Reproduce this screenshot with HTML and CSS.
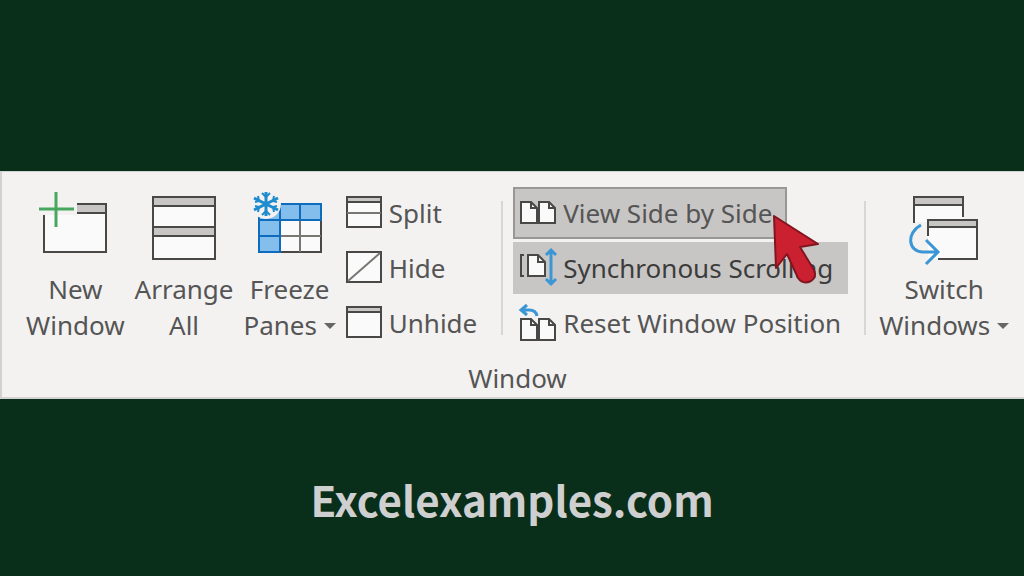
FILE: index.html
```
<!DOCTYPE html>
<html lang="en">
<head>
  <meta charset="utf-8">
  <title>View Side by Side</title>
  <link rel="stylesheet" href="styles.css">
</head>
<body>
  <section class="ribbon">
    <div class="tools">
      <button class="big">
        <svg class="big-icon" viewBox="0 0 72 74">
          <path class="paper" d="M5 24H38V13H67V61H5z"/>
          <path class="bar" d="M38 13H67V22H38z"/>
          <path class="line" d="M38 13H67V61H5V24M38 22H67"/>
          <path class="green" d="M17 1V36M0 18H35"/>
        </svg>
        <span>New<br>Window</span>
      </button>
      <button class="big">
        <svg class="big-icon" viewBox="0 0 72 74">
          <path class="paper" d="M5 6H67V68H5z"/>
          <path class="bar" d="M5 6H67V15H5zM5 36H67V45H5z"/>
          <path class="line" d="M5 6H67V68H5zM5 15H67M5 36H67M5 45H67"/>
        </svg>
        <span>Arrange<br>All</span>
      </button>
      <button class="big">
        <svg class="big-icon" viewBox="0 0 72 74">
          <path class="paper" d="M5 13H67V61H5z"/>
          <path class="line" d="M26 61H67V29"/>
          <path class="thin" d="M46 29V61M26 45H67"/>
          <path class="frozen" d="M5 13H67V29H26V61H5z"/>
          <path class="blue-line" d="M5 29H26V13M46 13V29M5 45H26"/>
          <circle class="halo" cx="12" cy="13" r="15"/>
          <path class="flake" d="M12 1V25M0 7L24 19M0 19L24 7"/>
          <path class="flake-tip" d="M8 2L12 6L16 2M8 24L12 20L16 24M1 11L5 10L4 5M23 11L19 10L20 5M1 15L5 16L4 21M23 15L19 16L20 21"/>
        </svg>
        <span>Freeze<br>Panes <i class="caret"></i></span>
      </button>

      <div class="list">
        <button class="row">
          <svg class="small-icon" viewBox="0 1 38 34">
            <path class="paper" d="M2 2H36V32H2z"/>
            <path class="bar" d="M2 2H36V7H2z"/>
            <path class="line" d="M2 2H36V32H2zM2 7H36"/>
            <path class="thin" d="M2 18H36"/>
          </svg>
          <span>Split</span>
        </button>
        <button class="row">
          <svg class="small-icon" viewBox="0 1 38 34">
            <path class="paper line" d="M2 2H36V32H2z"/>
            <path class="thin" d="M3 31L35 3"/>
          </svg>
          <span>Hide</span>
        </button>
        <button class="row">
          <svg class="small-icon" viewBox="0 1 38 34">
            <path class="paper" d="M2 2H36V32H2z"/>
            <path class="bar" d="M2 2H36V7H2z"/>
            <path class="line" d="M2 2H36V32H2zM2 7H36"/>
          </svg>
          <span>Unhide</span>
        </button>
      </div>

      <div class="divider"></div>

      <div class="list compare">
        <button class="row active hover">
          <svg class="small-icon" viewBox="0 1 38 38">
            <path class="paper line" d="M2 9H12L18 15V30H2zM20 9H30L36 15V30H20z"/>
            <path class="line" d="M12 9V15H18M30 9V15H36"/>
          </svg>
          <span>View Side by Side</span>
          <svg class="pointer" viewBox="0 0 48 72">
            <path d="M2 3L46 31L28 34L42 57Q45 64 39 68Q31 72 26 65L15 41L4 55z"/>
          </svg>
        </button>
        <button class="row active">
          <svg class="small-icon" viewBox="0 1 38 38">
            <path class="paper line" d="M9 7H19L26 14V28H9z"/>
            <path class="line" d="M19 7V14H26M5 7H2V28H5"/>
            <path class="arrow" d="M32 2V36M27 7L32 2L37 7M27 31L32 36L37 31"/>
          </svg>
          <span class="dark">Synchronous Scrolling</span>
        </button>
        <button class="row">
          <svg class="small-icon" viewBox="0 1 38 38">
            <path class="paper line" d="M2 16H12L18 22V37H2zM20 16H30L36 22V37H20z"/>
            <path class="line" d="M12 16V22H18M30 16V22H36"/>
            <path class="arrow" d="M8 2L2 7L8 12M2 7H10Q17 7 18 13"/>
          </svg>
          <span>Reset Window Position</span>
        </button>
      </div>

      <div class="divider"></div>

      <button class="big">
        <svg class="big-icon" viewBox="0 0 72 74">
          <path class="paper" d="M6 6H55V29H20V31H6z"/>
          <path class="bar" d="M6 6H55V14H6z"/>
          <path class="line" d="M6 32V6H55V26M6 14H55"/>
          <path class="paper" d="M20 29H69V68H20z"/>
          <path class="bar" d="M20 29H69V36H20z"/>
          <path class="line" d="M20 45V29H69V68H30M20 36H69"/>
          <path class="arrow" d="M13 34C-2 42 0 61 15 61H30M18 49L30 61L18 73"/>
        </svg>
        <span>Switch<br>Windows <i class="caret"></i></span>
      </button>
    </div>
    <div class="group-name">Window</div>
  </section>
  <footer class="site">Excelexamples.com</footer>
</body>
</html>
```

FILE: styles.css
```
body {
  margin: 0;
  padding-top: 171px;
  background: #092f1b;
  font-family: "Noto Sans", "Open Sans", sans-serif;
}
.ribbon {
  padding: 15px 10px 0 19px;
  background: #f3f2f1;
  border: solid #d2d2d2;
  border-width: 1px 0 2px 2px;
  color: #555;
  font-size: 26px;
}
.tools {
  display: flex;
  align-items: flex-start;
}
button {
  padding: 0;
  border: 0;
  background: none;
  color: inherit;
  font: inherit;
  white-space: nowrap;
}
svg {
  fill: none;
  overflow: visible;
}
.big {
  display: flex;
  flex-direction: column;
  align-items: center;
  gap: 6px;
  padding: 4px 5px 0;
  line-height: 36px;
}
.big-icon {
  width: 72px;
  height: 74px;
}
.caret {
  display: inline-block;
  border: 6px solid transparent;
  border-top-color: #666;
  border-bottom: 0;
  vertical-align: 6px;
}
.list {
  display: flex;
  flex-direction: column;
  align-items: flex-start;
  gap: 3px;
  margin-left: 4px;
}
.row {
  display: flex;
  align-items: center;
  gap: 6px;
  box-sizing: border-box;
  height: 52px;
  line-height: 36px;
}
.small-icon {
  width: 38px;
  flex: none;
}
.compare {
  margin-left: 10px;
}
.compare .row {
  padding: 0 13px 0 4px;
  border: 2px solid transparent;
}
.compare .active {
  background: #c8c6c4;
  border-color: #c8c6c4;
}
.compare .hover {
  position: relative;
  border-color: #989796;
}
.dark {
  color: #3c3c3c;
}
.divider {
  width: 2px;
  height: 134px;
  margin: 14px 0 0 auto;
  background: #d8d7d6;
}
.compare + .divider {
  margin-left: 8px;
}
.divider + .big {
  margin-left: 8px;
}
.pointer {
  position: absolute;
  right: -35px;
  top: 24px;
  z-index: 1;
  width: 48px;
  height: 72px;
  fill: #cb202f;
  stroke: #82151f;
  stroke-width: 2;
  stroke-linejoin: round;
}
.group-name {
  padding: 11px 0 1px;
  text-align: center;
  line-height: 36px;
}
.site {
  margin-top: 69px;
  color: #cfcfcf;
  font: bold 42px/62px "Noto Sans CJK SC", sans-serif;
  text-align: center;
}

/* icon parts */
.paper {
  fill: #fafafa;
}
.bar {
  fill: #c8c6c4;
}
.line {
  stroke: #484846;
  stroke-width: 2;
}
.thin {
  stroke: #797774;
  stroke-width: 2;
}
.green {
  stroke: #47a75f;
  stroke-width: 3;
}
.frozen {
  fill: #83beec;
  stroke: #0f6cbd;
  stroke-width: 2;
}
.blue-line {
  stroke: #0f6cbd;
  stroke-width: 2;
}
.halo {
  fill: #f3f2f1;
}
.flake {
  stroke: #1e8bcd;
  stroke-width: 3;
}
.flake-tip {
  stroke: #1e8bcd;
  stroke-width: 2;
}
.arrow {
  stroke: #3a96d4;
  stroke-width: 3;
}
```
